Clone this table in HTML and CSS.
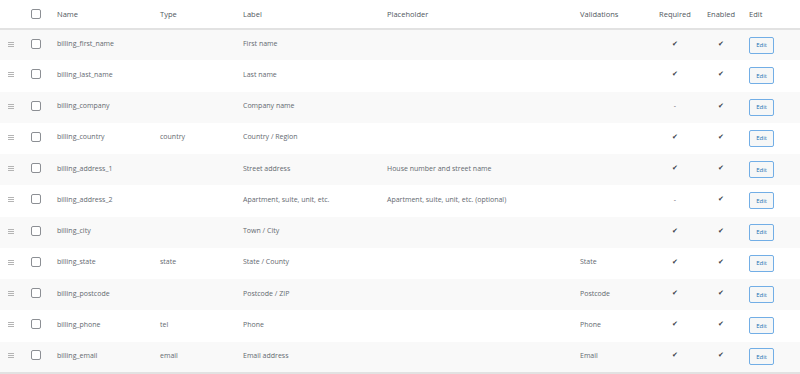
FILE: index.html
```html
<!DOCTYPE html>
<html lang="en">

<head>
    <meta charset="UTF-8">
    <meta name="viewport" content="width=device-width, initial-scale=1.0">
    <title>Checkout fields</title>
    <link rel="stylesheet" href="styles.css">
</head>

<body>
    <table class="fields">
        <colgroup>
            <col class="c-sort">
            <col class="c-check">
            <col class="c-name">
            <col class="c-type">
            <col class="c-label">
            <col class="c-placeholder">
            <col class="c-valid">
            <col class="c-required">
            <col class="c-enabled">
            <col class="c-edit">
        </colgroup>
        <thead>
            <tr>
                <th></th>
                <th class="check"><span class="box"></span></th>
                <th>Name</th>
                <th>Type</th>
                <th>Label</th>
                <th>Placeholder</th>
                <th>Validations</th>
                <th class="center">Required</th>
                <th class="center">Enabled</th>
                <th>Edit</th>
            </tr>
        </thead>
        <tbody>
            <tr>
                <td class="sort"><span class="handle"></span></td>
                <td class="check"><span class="box"></span></td>
                <td>billing_first_name</td>
                <td></td>
                <td>First name</td>
                <td></td>
                <td></td>
                <td class="center tick">✔</td>
                <td class="center tick">✔</td>
                <td><button class="edit">Edit</button></td>
            </tr>
            <tr>
                <td class="sort"><span class="handle"></span></td>
                <td class="check"><span class="box"></span></td>
                <td>billing_last_name</td>
                <td></td>
                <td>Last name</td>
                <td></td>
                <td></td>
                <td class="center tick">✔</td>
                <td class="center tick">✔</td>
                <td><button class="edit">Edit</button></td>
            </tr>
            <tr>
                <td class="sort"><span class="handle"></span></td>
                <td class="check"><span class="box"></span></td>
                <td>billing_company</td>
                <td></td>
                <td>Company name</td>
                <td></td>
                <td></td>
                <td class="center">-</td>
                <td class="center tick">✔</td>
                <td><button class="edit">Edit</button></td>
            </tr>
            <tr>
                <td class="sort"><span class="handle"></span></td>
                <td class="check"><span class="box"></span></td>
                <td>billing_country</td>
                <td>country</td>
                <td>Country / Region</td>
                <td></td>
                <td></td>
                <td class="center tick">✔</td>
                <td class="center tick">✔</td>
                <td><button class="edit">Edit</button></td>
            </tr>
            <tr>
                <td class="sort"><span class="handle"></span></td>
                <td class="check"><span class="box"></span></td>
                <td>billing_address_1</td>
                <td></td>
                <td>Street address</td>
                <td>House number and street name</td>
                <td></td>
                <td class="center tick">✔</td>
                <td class="center tick">✔</td>
                <td><button class="edit">Edit</button></td>
            </tr>
            <tr>
                <td class="sort"><span class="handle"></span></td>
                <td class="check"><span class="box"></span></td>
                <td>billing_address_2</td>
                <td></td>
                <td>Apartment, suite, unit, etc.</td>
                <td>Apartment, suite, unit, etc. (optional)</td>
                <td></td>
                <td class="center">-</td>
                <td class="center tick">✔</td>
                <td><button class="edit">Edit</button></td>
            </tr>
            <tr>
                <td class="sort"><span class="handle"></span></td>
                <td class="check"><span class="box"></span></td>
                <td>billing_city</td>
                <td></td>
                <td>Town / City</td>
                <td></td>
                <td></td>
                <td class="center tick">✔</td>
                <td class="center tick">✔</td>
                <td><button class="edit">Edit</button></td>
            </tr>
            <tr>
                <td class="sort"><span class="handle"></span></td>
                <td class="check"><span class="box"></span></td>
                <td>billing_state</td>
                <td>state</td>
                <td>State / County</td>
                <td></td>
                <td>State</td>
                <td class="center tick">✔</td>
                <td class="center tick">✔</td>
                <td><button class="edit">Edit</button></td>
            </tr>
            <tr>
                <td class="sort"><span class="handle"></span></td>
                <td class="check"><span class="box"></span></td>
                <td>billing_postcode</td>
                <td></td>
                <td>Postcode / ZIP</td>
                <td></td>
                <td>Postcode</td>
                <td class="center tick">✔</td>
                <td class="center tick">✔</td>
                <td><button class="edit">Edit</button></td>
            </tr>
            <tr>
                <td class="sort"><span class="handle"></span></td>
                <td class="check"><span class="box"></span></td>
                <td>billing_phone</td>
                <td>tel</td>
                <td>Phone</td>
                <td></td>
                <td>Phone</td>
                <td class="center tick">✔</td>
                <td class="center tick">✔</td>
                <td><button class="edit">Edit</button></td>
            </tr>
            <tr>
                <td class="sort"><span class="handle"></span></td>
                <td class="check"><span class="box"></span></td>
                <td>billing_email</td>
                <td>email</td>
                <td>Email address</td>
                <td></td>
                <td>Email</td>
                <td class="center tick">✔</td>
                <td class="center tick">✔</td>
                <td><button class="edit">Edit</button></td>
            </tr>
        </tbody>
    </table>
</body>

</html>
```

FILE: styles.css
```css
body {
    margin: 0;
    background-color: #fff;
    font-family: 'Open Sans', sans-serif;
    color: #646970;
}

.fields {
    width: 800px;
    border-collapse: collapse;
    table-layout: fixed;
    border-bottom: 2px solid #e2e2e2;
}

.c-sort { width: 24px; }
.c-check { width: 26px; }
.c-name { width: 103px; }
.c-type { width: 83px; }
.c-label { width: 144px; }
.c-placeholder { width: 193px; }
.c-valid { width: 77px; }
.c-required { width: 50px; }
.c-enabled { width: 42px; }
.c-edit { width: 58px; }

thead tr {
    height: 29px;
}

th {
    padding: 0 0 1px 7px;
    text-align: left;
    font-weight: normal;
    font-size: 7.5px;
    color: #50575e;
    border-bottom: 2px solid #e2e2e2;
}

tbody tr {
    height: 31.25px;
}

td {
    padding: 0 0 3px 7px;
    font-size: 7px;
    white-space: nowrap;
}

tbody tr:nth-child(odd) {
    background-color: #f9f9f9;
}

th.center,
td.center {
    padding-left: 0;
    text-align: center;
}

.tick {
    color: #3c434a;
    font-family: 'DejaVu Sans', sans-serif;
    font-size: 7px;
}

td.sort {
    padding-left: 8px;
}

.handle {
    display: block;
    width: 6px;
    height: 1px;
    background-color: #b4b4b4;
    box-shadow: 0 2px 0 #b4b4b4, 0 4px 0 #b4b4b4;
    margin-top: -2px;
}

.box {
    display: block;
    width: 8px;
    height: 8px;
    border: 1px solid #8c8f94;
    border-radius: 2px;
    background-color: #fff;
}

td .edit {
    display: block;
    width: 25px;
    height: 17px;
    margin-top: 3px;
    padding: 0;
    border: 1px solid #72aee6;
    border-radius: 2px;
    background-color: #f6f7f7;
    color: #2271b1;
    font-family: 'Open Sans', sans-serif;
    font-size: 6px;
    cursor: pointer;
}
```
